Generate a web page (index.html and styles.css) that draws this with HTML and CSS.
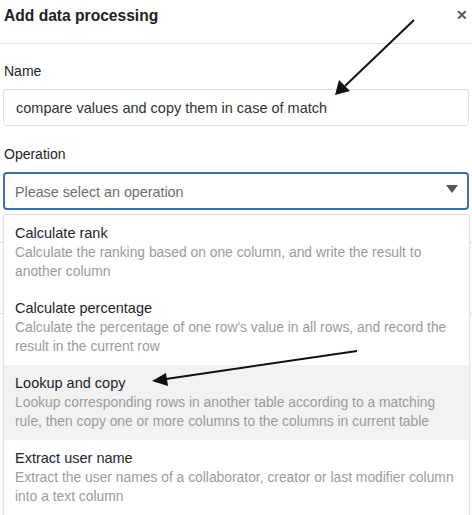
FILE: index.html
```html
<!DOCTYPE html>
<html>
<head>
<meta charset="utf-8">
<link rel="stylesheet" href="styles.css">
</head>
<body>
<div class="dialog">
  <div class="header">
    <div class="title">Add data processing</div>
    <div class="close">&#x2715;</div>
  </div>
  <div class="form">
    <div class="label label-name">Name</div>
    <div class="input">compare values and copy them in case of match</div>
    <div class="label label-op">Operation</div>
    <div class="select">
      <span class="placeholder">Please select an operation</span>
      <svg class="caret" width="12" height="8" viewBox="0 0 12 8"><path d="M0 0 H12 L6 8 Z" fill="#555"/></svg>
    </div>
    <div class="under-line first"></div>
    <div class="under-line second"></div>
  </div>
  <div class="menu">
    <div class="item">
      <div class="item-title">Calculate rank</div>
      <div class="item-desc">Calculate the ranking based on one column, and write the result to another column</div>
    </div>
    <div class="item">
      <div class="item-title">Calculate percentage</div>
      <div class="item-desc">Calculate the percentage of one row's value in all rows, and record the result in the current row</div>
    </div>
    <div class="item active">
      <div class="item-title">Lookup and copy</div>
      <div class="item-desc">Lookup corresponding rows in another table according to a matching rule, then copy one or more columns to the columns in current table</div>
    </div>
    <div class="item">
      <div class="item-title">Extract user name</div>
      <div class="item-desc">Extract the user names of a collaborator, creator or last modifier column into a text column</div>
    </div>
  </div>
  <svg class="arrows" width="472" height="515" viewBox="0 0 472 515">
    <line x1="414" y1="20" x2="345" y2="86" stroke="#111" stroke-width="2"/>
    <path d="M335 95 L339 80 L350 91 Z" fill="#111"/>
    <line x1="357" y1="351" x2="166" y2="379" stroke="#111" stroke-width="2"/>
    <path d="M152 381 L166 373 L168 386 Z" fill="#111"/>
  </svg>
</div>
</body>
</html>
```
FILE: styles.css
```css
* { box-sizing: border-box; }
html, body { margin: 0; padding: 0; background: #fff; }
body {
  font-family: "Liberation Sans", Arial, sans-serif;
  font-size: 14px;
  color: #212529;
  width: 472px;
  height: 515px;
  overflow: hidden;
}
.dialog { position: relative; width: 472px; height: 515px; }
.header {
  height: 44px;
  border-bottom: 1px solid #e3e3e3;
  display: flex;
  justify-content: space-between;
  align-items: flex-start;
  padding: 6px 4px 0 4px;
}
.title { font-size: 15.6px; font-weight: bold; line-height: 20px; color: #222; }
.close { font-size: 13.5px; font-weight: bold; color: #555; line-height: 20px; }
.form { padding: 0 3px 0 3px; }
.label { line-height: 20px; padding-left: 1px; color: #212529; }
.label-name { margin-top: 17px; }
.label-op { margin-top: 18px; }
.input {
  margin-top: 8px;
  height: 37px;
  border: 1px solid #ddd;
  border-radius: 3px;
  padding: 0 12px;
  display: flex;
  align-items: center;
  color: #333;
  font-size: 14.5px;
}
.select {
  margin-top: 8px;
  height: 38px;
  border: 2px solid #3c6ea7;
  border-radius: 4px;
  padding: 2px 9px 0 10px;
  display: flex;
  align-items: center;
  justify-content: space-between;
}
.placeholder { color: #6e6e6e; font-size: 14.3px; }
.caret { margin-top: -6px; }
.under-line { height: 1px; background: #e0e0e0; margin: 0 -3px; }
.under-line.first { margin-top: 32px; }
.under-line.second { margin-top: 70px; }
.menu {
  position: absolute;
  left: 3px;
  top: 214px;
  width: 467px;
  height: 305px;
  background: #fff;
  border: 1px solid #e2e2e2;
  border-radius: 3px;
  box-shadow: 0 1px 3px rgba(0,0,0,0.08);
}
.item { padding: 9px 12px 9px 11px; height: 75px; }
.item.active { background: #f2f2f2; }
.item-title { line-height: 19px; color: #212529; font-size: 14.5px; }
.item-desc { line-height: 19px; color: #9b9b9b; font-size: 13.85px; }
.arrows { position: absolute; left: 0; top: 0; pointer-events: none; }
```
